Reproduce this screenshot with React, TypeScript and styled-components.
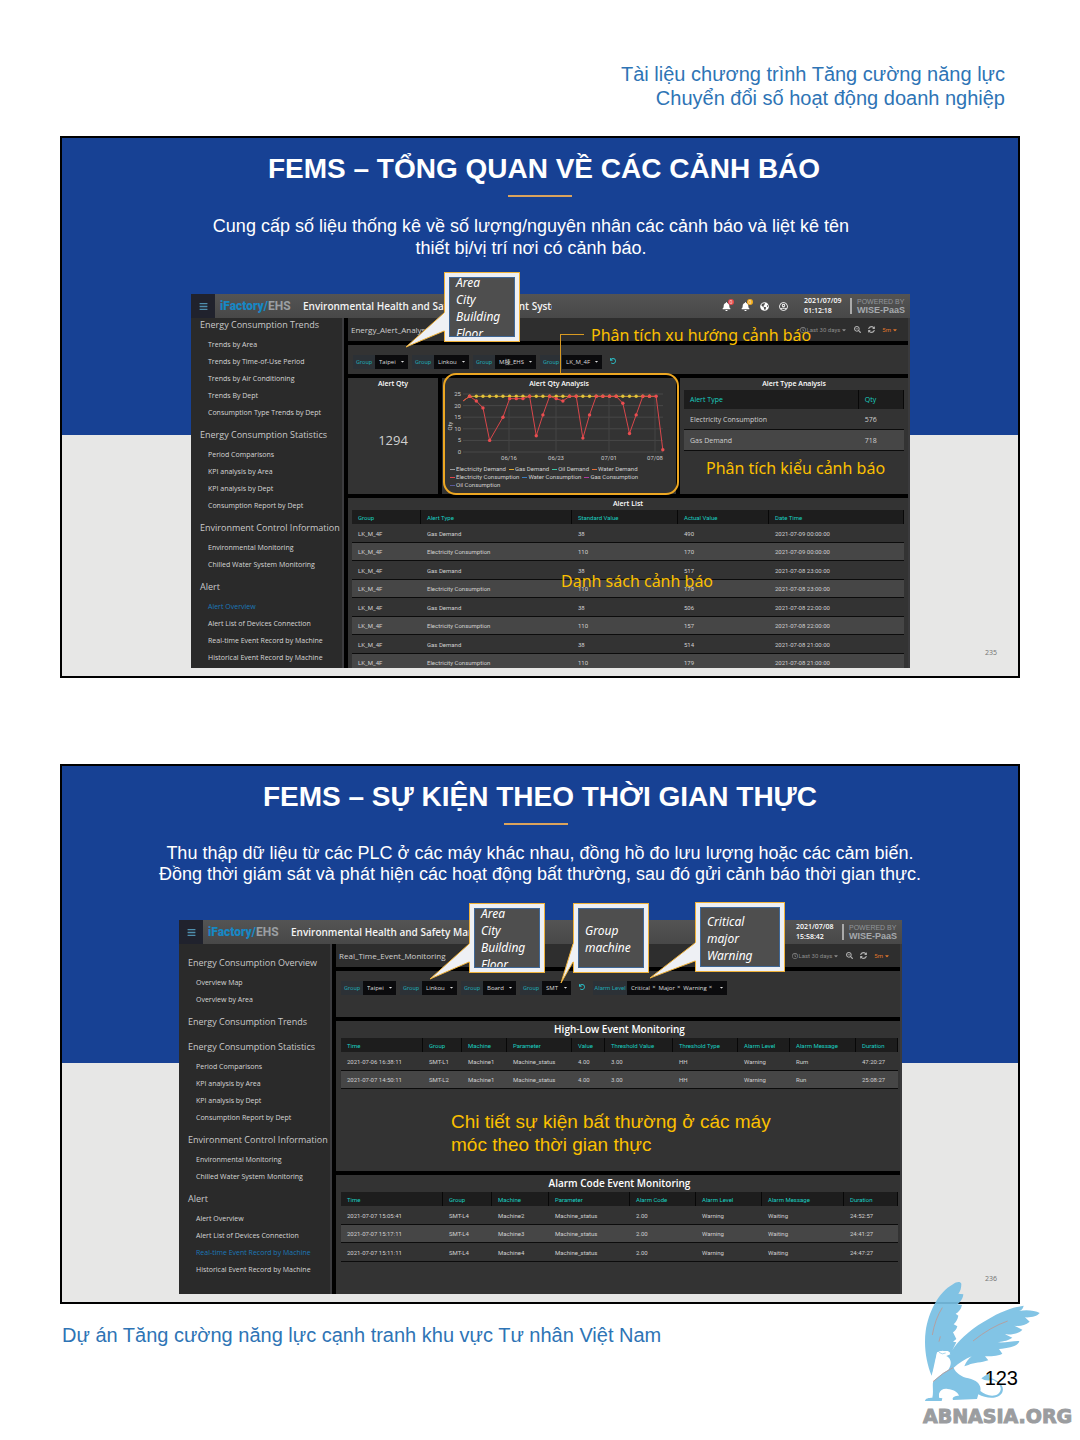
import React from "react";
import styled, { createGlobalStyle } from "styled-components";
import {
  FaBars,
  FaBell,
  FaCaretDown,
  FaGlobeAmericas,
  FaRegClock,
  FaRegUserCircle,
  FaSearchMinus,
  FaSyncAlt,
  FaUndo,
} from "react-icons/fa";

const ui = `"Open Sans", "Noto Sans", "Noto Sans CJK TC", sans-serif`;
const small = `Roboto, "Noto Sans", "Noto Sans CJK TC", sans-serif`;
const note = `"Noto Sans", sans-serif`;
const teal = "#19cfc0";

const GlobalStyle = createGlobalStyle`
  *, *::before, *::after { box-sizing: border-box; }
  body { margin: 0; background: #fff; font-family: "Liberation Sans", Arial, sans-serif; }
  h1, h2, h3, h4, p, ul { margin: 0; padding: 0; font-weight: inherit; }
  button, select { font: inherit; color: inherit; border: 0; padding: 0; margin: 0; background: none; }
  a { color: inherit; text-decoration: none; }
`;

/* ---------- document ---------- */

const Page = styled.div`
  padding: 62px 60px 0;
`;
const DocHeader = styled.header`
  padding: 0 15px 26px;
  text-align: right;
  font-size: 20px;
  line-height: 24px;
  color: #2e74b5;
`;
const Slides = styled.main`
  display: flex;
  flex-direction: column;
  gap: 86px;
`;
const DocFooter = styled.footer`
  position: relative;
  padding: 19px 2px 0;
  font-size: 20px;
  line-height: 24px;
  color: #2e74b5;
`;
const PageNumber = styled.p`
  position: relative;
  z-index: 1;
  padding: 19px 0 51px;
  text-align: right;
  color: #000;
`;
const Watermark = styled.div`
  position: absolute;
  top: -25px;
  right: -57px;
  width: 154px;
  opacity: 0.92;
`;
const Griffin = styled.svg`
  display: block;
  width: 120px;
  height: 124px;
`;
const WatermarkText = styled.p`
  font: bold 19px/26px "DejaVu Sans", sans-serif;
  color: #939598;
  -webkit-text-stroke: 1px #939598;
`;

/* ---------- slide ---------- */

const SlideBox = styled.section`
  position: relative;
  border: 2px solid #000;
  padding: 13px 0 8px;
  background: linear-gradient(#174194 297px, #e7e7e6 297px);
`;
const SlideHead = styled.header<{ $indent: number }>`
  display: flex;
  flex-direction: column;
  align-items: center;
  padding-left: ${(p) => p.$indent}px;
  color: #fff;
  text-align: center;
`;
const SlideTitle = styled.h1`
  font-size: 28px;
  line-height: 36px;
  font-weight: bold;
`;
const Rule = styled.hr`
  width: 64px;
  height: 2px;
  margin: 8px 8px 18px 0;
  border: 0;
  background: #dba35c;
`;
const Lead = styled.p<{ $line: number; $outdent: number }>`
  font-size: 18px;
  line-height: ${(p) => p.$line}px;
  padding-right: ${(p) => p.$outdent}px;
`;
const SlideNumber = styled.span`
  position: absolute;
  right: 21px;
  bottom: 18px;
  font: 7px/10px "Noto Sans", sans-serif;
  color: #777;
`;
const Figure = styled.div<{ $left: number; $right: number }>`
  position: relative;
  margin: 35px ${(p) => p.$right}px 0 ${(p) => p.$left}px;
`;

/* ---------- dashboard shell ---------- */

const Dashboard = styled.div<{ $height: number }>`
  display: flex;
  flex-direction: column;
  height: ${(p) => p.$height}px;
  overflow: hidden;
  background: #000;
  color: #d0d0d0;
  font-family: ${ui};
`;
const AppBar = styled.header`
  flex: none;
  display: flex;
  align-items: center;
  height: 24px;
  background: linear-gradient(#545454, #484848);
`;
const MenuButton = styled.button`
  flex: none;
  display: grid;
  place-items: center;
  width: 24px;
  height: 24px;
  background: #20222d;
  color: #4f8fae;
  font-size: 9px;
`;
const Brand = styled.span`
  flex: none;
  width: 83px;
  padding-left: 5px;
  font: bold 12px/24px Roboto, sans-serif;
  color: #9b9fa3;
  white-space: nowrap;
  b { font-weight: 900; color: #1787c4; }
`;
const AppTitle = styled.h2`
  width: 254px;
  padding-left: 5px;
  overflow: hidden;
  white-space: nowrap;
  font-size: 10px;
  line-height: 24px;
  font-weight: 600;
  color: #f4f4f4;
`;
const BarTools = styled.div`
  margin-left: auto;
  display: flex;
  align-items: center;
  padding-right: 6px;
  color: #fff;
`;
const IconButton = styled.button`
  position: relative;
  display: grid;
  place-items: center;
  width: 19px;
  height: 20px;
  font-size: 9px;
`;
const Badge = styled.span<{ $color: string }>`
  position: absolute;
  top: 3px;
  right: 2px;
  width: 6px;
  height: 6px;
  border-radius: 3px;
  background: ${(p) => p.$color};
  font-size: 5px;
  line-height: 6px;
  text-align: center;
`;
const Stamp = styled.time`
  width: 46px;
  margin-left: 11px;
  font-size: 7px;
  line-height: 10px;
  font-weight: 600;
`;
const Powered = styled.p`
  width: 54px;
  padding-left: 5px;
  border-left: 2px solid #aaa;
  font: 7px/8px "Liberation Sans", sans-serif;
  color: #90959a;
  white-space: nowrap;
  b { display: block; color: #a5a9ad; font-size: 9px; }
`;
const Body = styled.div`
  flex: 1;
  display: flex;
  min-height: 0;
`;
const SideNav = styled.nav`
  flex: none;
  width: 153px;
  padding-left: 9px;
  overflow: hidden;
  background: #2a2a2a;
  border-right: 2px solid #3c3c3f;
  white-space: nowrap;
`;
const NavScroll = styled.div<{ $offset: number }>`
  margin-top: ${(p) => p.$offset}px;
`;
const NavHeading = styled.h3`
  padding-top: 2px;
  font-size: 9px;
  line-height: 23px;
  color: #c9c9c9;
`;
const NavList = styled.ul`
  list-style: none;
  padding-left: 8px;
`;
const NavItem = styled.li<{ $active: boolean }>`
  font-size: 7px;
  line-height: 17px;
  color: ${(p) => (p.$active ? "#1b78b8" : "#d6d6d6")};
`;
const Main = styled.div`
  flex: 1;
  min-width: 0;
  display: flex;
  flex-direction: column;
  gap: 4px;
  margin-left: 4px;
  border-right: 2px solid #3a3a3c;
`;
const TitleBar = styled.div`
  flex: none;
  display: flex;
  align-items: center;
  justify-content: space-between;
  height: 23px;
  padding: 0 10px 0 3px;
  background: #2e2e2e;
  font-size: 8px;
`;
const TimeTools = styled.div`
  display: flex;
  align-items: center;
  gap: 7px;
  font-size: 7px;
  color: #b0b0b0;
`;
const TextButton = styled.button<{ $color: string }>`
  display: flex;
  align-items: center;
  gap: 1px;
  color: ${(p) => p.$color};
  font: 6px/10px ${small};
`;

/* ---------- filters ---------- */

const Filters = styled.form<{ $height: number }>`
  flex: none;
  display: flex;
  align-items: flex-start;
  gap: 4px;
  height: ${(p) => p.$height}px;
  padding: 10px 5px 0;
  background: #333;
  font-size: 6px;
`;
const Field = styled.div`
  display: flex;
  height: 14px;
  line-height: 14px;
`;
const FieldLabel = styled.label<{ $width: number }>`
  width: ${(p) => p.$width}px;
  background: #2c3136;
  color: #1fa3ae;
  text-align: center;
  font-family: ${small};
  white-space: nowrap;
`;
const SelectWrap = styled.span<{ $width: number }>`
  position: relative;
  width: ${(p) => p.$width}px;
  background: #0b0b0d;
  color: #ddd;
`;
const Select = styled.select`
  display: block;
  width: 100%;
  height: 14px;
  padding-left: 4px;
  appearance: none;
  font-size: 6px;
`;
const Caret = styled(FaCaretDown)`
  position: absolute;
  right: 3px;
  top: 4px;
  font-size: 5px;
  pointer-events: none;
`;
const ResetButton = styled.button`
  width: 14px;
  height: 14px;
  color: #2bbcc4;
  font-size: 6px;
`;
const Tags = styled.div`
  position: relative;
  display: flex;
  gap: 3px;
  width: 100px;
  padding-left: 4px;
  background: #0b0b0d;
  color: #ddd;
  white-space: nowrap;
`;
const Tag = styled.span`
  display: flex;
  gap: 2px;
  button { line-height: 10px; height: 12px; }
`;

/* ---------- panels and tables ---------- */

const PanelRow = styled.div`
  flex: none;
  display: grid;
  grid-template-columns: 90fr 234fr 228fr;
  gap: 4px;
  height: 116px;
`;
const Panel = styled.section<{ $height?: number; $flush?: boolean }>`
  ${(p) => (p.$height ? `flex: none; height: ${p.$height}px;` : "flex: 1;")}
  min-width: 0;
  min-height: 0;
  overflow: hidden;
  padding: ${(p) => (p.$flush ? "0 2px 0 5px" : "0 4px")};
  background: #333;
`;
const PanelTitle = styled.h3<{ $large?: boolean }>`
  font-size: ${(p) => (p.$large ? 10 : 7)}px;
  line-height: ${(p) => (p.$large ? 17 : 12)}px;
  font-weight: 600;
  text-align: center;
  color: #fff;
`;
const BigNumber = styled.p`
  padding-top: 39px;
  text-align: center;
  font-size: 13px;
  line-height: 22px;
`;
const Table = styled.table<{ $roomy?: boolean }>`
  width: 100%;
  table-layout: fixed;
  border-collapse: separate;
  border-spacing: 0;
  font-family: ${(p) => (p.$roomy ? ui : small)};
  font-size: ${(p) => (p.$roomy ? 7 : 6)}px;
  white-space: nowrap;
  th, td { padding: 0 0 0 6px; text-align: left; font-weight: normal; }
  th {
    height: ${(p) => (p.$roomy ? 19 : 14)}px;
    color: ${teal};
    background: #1d1d1d;
    border-right: 1px solid #080808;
  }
  td {
    height: ${(p) => (p.$roomy ? 21 : 19)}px;
    border-bottom: 1px solid #0c0c0c;
  }
  tbody tr:nth-child(even) td {
    height: ${(p) => (p.$roomy ? 21 : 18)}px;
    background: #464646;
  }
`;
const ChartSvg = styled.svg`
  display: block;
  width: 100%;
  height: 72px;
  font-family: ${small};
`;
const Legend = styled.ul`
  list-style: none;
  display: flex;
  flex-wrap: wrap;
  column-gap: 3px;
  margin: 3px 10px 0 0;
  padding-left: 4px;
  font: 6px/8px ${small};
  white-space: nowrap;
`;
const LegendItem = styled.li<{ $color: string }>`
  display: flex;
  align-items: center;
  gap: 1px;
  &::before {
    content: "";
    width: 5px;
    height: 1px;
    background: ${(p) => p.$color};
  }
`;

/* ---------- annotations ---------- */

const CalloutBox = styled.aside<{ $x: number; $y: number; $w: number; $h: number }>`
  position: absolute;
  left: ${(p) => p.$x}px;
  top: ${(p) => p.$y}px;
  width: ${(p) => p.$w}px;
  height: ${(p) => p.$h}px;
  padding: 4px;
  border: 1px solid #efb23a;
  background: #eef0f4;
`;
const CalloutInner = styled.div`
  display: flex;
  align-items: center;
  height: 100%;
  padding: 2px 0 0 6px;
  overflow: hidden;
  border: 1px solid #3f6796;
  background: #4e4e4e;
  font: italic 12px/17px ${note};
  color: #fff;
  white-space: pre-line;
`;
const Tail = styled.svg`
  position: absolute;
  left: -1px;
  top: -1px;
  width: 5px;
  height: 80px;
  overflow: visible;
`;
const Ring = styled.div`
  position: absolute;
  left: 252px;
  right: 231px;
  top: 79px;
  height: 122px;
  border: 2px solid #eda722;
  border-radius: 13px;
`;
const Connector = styled.div`
  position: absolute;
  left: 369px;
  top: 40px;
  width: 24px;
  height: 39px;
  border: solid #d99a22;
  border-width: 1px 0 0 1px;
`;
const Note = styled.p<{ $x: number; $y: number; $sans?: boolean }>`
  position: absolute;
  left: ${(p) => p.$x}px;
  top: ${(p) => p.$y}px;
  font: ${(p) => (p.$sans ? `19px/23px "Liberation Sans", sans-serif` : `16px/22px ${note}`)};
  color: #fcc000;
  white-space: pre;
`;

/* ---------- data ---------- */

type NavGroup = { title: string; items: string[] };

const statistics: NavGroup = {
  title: "Energy Consumption Statistics",
  items: ["Period Comparisons", "KPI analysis by Area", "KPI analysis by Dept", "Consumption Report by Dept"],
};
const environment: NavGroup = {
  title: "Environment Control Information",
  items: ["Environmental Monitoring", "Chilled Water System Monitoring"],
};
const alertGroup: NavGroup = {
  title: "Alert",
  items: [
    "Alert Overview",
    "Alert List of Devices Connection",
    "Real-time Event Record by Machine",
    "Historical Event Record by Machine",
  ],
};
const overviewNav: NavGroup[] = [
  {
    title: "Energy Consumption Trends",
    items: [
      "Trends by Area",
      "Trends by Time-of-Use Period",
      "Trends by Air Conditioning",
      "Trends By Dept",
      "Consumption Type Trends by Dept",
    ],
  },
  statistics,
  environment,
  alertGroup,
];
const eventNav: NavGroup[] = [
  { title: "Energy Consumption Overview", items: ["Overview Map", "Overview by Area"] },
  { title: "Energy Consumption Trends", items: [] },
  statistics,
  environment,
  alertGroup,
];

const alertRows = [
  ["490", "170", "2021-07-09 00:00:00"],
  ["517", "178", "2021-07-08 23:00:00"],
  ["506", "157", "2021-07-08 22:00:00"],
  ["514", "179", "2021-07-08 21:00:00"],
].flatMap(([gas, power, at]) => [
  ["LK_M_4F", "Gas Demand", "38", gas, at],
  ["LK_M_4F", "Electricity Consumption", "110", power, at],
]);

const alertsPerDay: (number | null)[] = [
  22, 24, 22, 19, 5, null, 15, 23, 23, 23, 24, 7, 16, 24, 23, 22, 24, 24, 6, 16, 24, 24, 24, 24, 21, 8, 16, 24, 24, 24, 1,
];
const legend: [string, string][] = [
  ["Electricity Demand", "#9a9a9a"],
  ["Gas Demand", "#e0a92a"],
  ["Oil Demand", "#3fc7a4"],
  ["Water Demand", "#e0703a"],
  ["Electricity Consumption", "#e0474c"],
  ["Water Consumption", "#3d7cc0"],
  ["Gas Consumption", "#b03aa0"],
  ["Oil Consumption", "#5a5a9a"],
];

/* ---------- components ---------- */

type DataTableProps = { head: string[]; widths: number[]; rows: string[][]; roomy?: boolean };

function DataTable({ head, widths, rows, roomy }: DataTableProps) {
  const total = widths.reduce((a, b) => a + b, 0);
  return (
    <Table $roomy={roomy}>
      <colgroup>
        {widths.map((w, i) => (
          <col key={i} style={{ width: `${(w / total) * 100}%` }} />
        ))}
      </colgroup>
      <thead>
        <tr>{head.map((h) => <th key={h} scope="col">{h}</th>)}</tr>
      </thead>
      <tbody>
        {rows.map((r, i) => (
          <tr key={i}>{r.map((c, j) => <td key={j}>{c}</td>)}</tr>
        ))}
      </tbody>
    </Table>
  );
}

function SelectField({ id, value, width }: { id: string; value: string; width: number }) {
  return (
    <Field>
      <FieldLabel htmlFor={id} $width={22}>Group</FieldLabel>
      <SelectWrap $width={width}>
        <Select id={id} defaultValue={value}>
          <option>{value}</option>
        </Select>
        <Caret />
      </SelectWrap>
    </Field>
  );
}

function TrendChart() {
  const x = (i: number) => 17 + i * 6.66;
  const y = (v: number) => 62 - v * 2.32;
  const points = alertsPerDay.flatMap((v, i) => (v === null ? [] : [{ x: x(i), y: y(v), v }]));
  const line = points.map((p) => `${p.x},${p.y}`).join(" ");
  return (
    <ChartSvg viewBox="0 0 226 72" preserveAspectRatio="none" role="img" aria-label="Alert Qty Analysis">
      {[0, 5, 10, 15, 20, 25].map((v) => (
        <g key={v}>
          <line x1="17" x2="217" y1={y(v)} y2={y(v)} stroke="#484848" strokeWidth="1" />
          <text x="15" y={y(v) + 2} fontSize="6" fill="#c8c8c8" textAnchor="end">{v}</text>
        </g>
      ))}
      {[["06/16", 63], ["06/23", 110], ["07/01", 163], ["07/08", 209]].map(([d, cx]) => (
        <g key={d}>
          <line x1={cx} x2={cx} y1={y(25)} y2={y(0)} stroke="#444" />
          <text x={cx} y="70" fontSize="6" fill="#c8c8c8" textAnchor="middle">{d}</text>
        </g>
      ))}
      <text transform="translate(6 36) rotate(-90)" fontSize="6" fill="#c8c8c8" textAnchor="middle">Qty</text>
      <polyline points={`${x(0)},${y(22)} ${x(1)},${y(24)} ${x(29)},${y(24)}`} fill="none" stroke="#d8a52c" />
      {Array.from({ length: 28 }, (_, i) => (
        <circle key={i} cx={x(i + 1)} cy={y(24)} r="1.7" fill="#e0c23a" />
      ))}
      <polyline points={line} fill="none" stroke="#d9474b" />
      {points.slice(1).map((p) => (
        <circle key={p.x} cx={p.x} cy={p.y} r="1.7" fill="#ea4d50" />
      ))}
    </ChartSvg>
  );
}

type ShellProps = {
  height: number;
  navOffset: number;
  nav: NavGroup[];
  active: string;
  title: string;
  date: string;
  time: string;
  children: React.ReactNode;
};

function Shell({ height, navOffset, nav, active, title, date, time, children }: ShellProps) {
  return (
    <Dashboard $height={height}>
      <AppBar>
        <MenuButton type="button" aria-label="Menu"><FaBars /></MenuButton>
        <Brand><b>iFactory/</b>EHS</Brand>
        <AppTitle>Environmental Health and Safety Management System</AppTitle>
        <BarTools>
          <IconButton type="button" aria-label="Alerts"><FaBell /><Badge $color="#e5484d">0</Badge></IconButton>
          <IconButton type="button" aria-label="Notices"><FaBell /><Badge $color="#f0a81e">0</Badge></IconButton>
          <IconButton type="button" aria-label="Language"><FaGlobeAmericas /></IconButton>
          <IconButton type="button" aria-label="Account"><FaRegUserCircle /></IconButton>
          <Stamp>{date}<br />{time}</Stamp>
          <Powered>POWERED BY<b>WISE-PaaS</b></Powered>
        </BarTools>
      </AppBar>
      <Body>
        <SideNav>
          <NavScroll $offset={navOffset}>
            {nav.map((g) => (
              <React.Fragment key={g.title}>
                <NavHeading>{g.title}</NavHeading>
                <NavList>
                  {g.items.map((item) => (
                    <NavItem key={item} $active={item === active}><a href="#">{item}</a></NavItem>
                  ))}
                </NavList>
              </React.Fragment>
            ))}
          </NavScroll>
        </SideNav>
        <Main>
          <TitleBar>
            <span>{title}</span>
            <TimeTools>
              <TextButton type="button" $color="#8c8c8c"><FaRegClock />Last 30 days <FaCaretDown /></TextButton>
              <FaSearchMinus />
              <FaSyncAlt />
              <TextButton type="button" $color="#e0762c">5m <FaCaretDown /></TextButton>
            </TimeTools>
          </TitleBar>
          {children}
        </Main>
      </Body>
    </Dashboard>
  );
}

type CalloutProps = { x: number; y: number; w: number; h: number; tip: [number, number]; text: string };

function Callout({ x, y, w, h, tip, text }: CalloutProps) {
  const [tx, ty] = tip;
  return (
    <CalloutBox $x={x} $y={y} $w={w} $h={h}>
      <CalloutInner><p>{text}</p></CalloutInner>
      <Tail aria-hidden="true">
        <polygon points={`4,39 0,41 ${tx},${ty} 0,59 4,57`} fill="#eef0f4" />
        <polyline points={`0,41 ${tx},${ty} 0,59`} fill="none" stroke="#efb23a" />
      </Tail>
    </CalloutBox>
  );
}

function AlertOverview() {
  return (
    <SlideBox>
      <SlideHead $indent={8}>
        <SlideTitle>FEMS – TỔNG QUAN VỀ CÁC CẢNH BÁO</SlideTitle>
        <Rule />
        <Lead $line={22} $outdent={26}>
          Cung cấp số liệu thống kê về số lượng/nguyên nhân các cảnh báo và liệt kê tên
          <br />
          thiết bị/vị trí nơi có cảnh báo.
        </Lead>
      </SlideHead>
      <Figure $left={129} $right={108}>
        <Shell
          height={374}
          navOffset={-7}
          nav={overviewNav}
          active="Alert Overview"
          title="Energy_Alert_Analysis"
          date="2021/07/09"
          time="01:12:18"
        >
          <Filters $height={29}>
            <SelectField id="area" value="Taipei" width={33} />
            <SelectField id="city" value="Linkou" width={35} />
            <SelectField id="building" value="M棟_EHS" width={41} />
            <SelectField id="floor" value="LK_M_4F" width={40} />
            <ResetButton type="button" aria-label="Reset"><FaUndo /></ResetButton>
          </Filters>
          <PanelRow>
            <Panel>
              <PanelTitle>Alert Qty</PanelTitle>
              <BigNumber>1294</BigNumber>
            </Panel>
            <Panel>
              <PanelTitle>Alert Qty Analysis</PanelTitle>
              <TrendChart />
              <Legend>
                {legend.map(([name, color]) => (
                  <LegendItem key={name} $color={color}>{name}</LegendItem>
                ))}
              </Legend>
            </Panel>
            <Panel>
              <PanelTitle>Alert Type Analysis</PanelTitle>
              <DataTable
                roomy
                head={["Alert Type", "Qty"]}
                widths={[178, 46]}
                rows={[["Electricity Consumption", "576"], ["Gas Demand", "718"]]}
              />
            </Panel>
          </PanelRow>
          <Panel>
            <PanelTitle>Alert List</PanelTitle>
            <DataTable
              head={["Group", "Alert Type", "Standard Value", "Actual Value", "Date Time"]}
              widths={[69, 151, 106, 91, 135]}
              rows={alertRows}
            />
          </Panel>
        </Shell>
        <Ring />
        <Connector />
        <Note $x={400} $y={30}>Phân tích xu hướng cảnh báo</Note>
        <Note $x={515} $y={163}>Phân tích kiểu cảnh báo</Note>
        <Note $x={370} $y={276}>Danh sách cảnh báo</Note>
        <Callout x={253} y={-22} w={76} h={70} tip={[-38, 75]} text={"Area\nCity\nBuilding\nFloor"} />
      </Figure>
      <SlideNumber>235</SlideNumber>
    </SlideBox>
  );
}

function RealTimeEvents() {
  return (
    <SlideBox>
      <SlideHead $indent={0}>
        <SlideTitle>FEMS – SỰ KIỆN THEO THỜI GIAN THỰC</SlideTitle>
        <Rule />
        <Lead $line={21} $outdent={0}>
          Thu thập dữ liệu từ các PLC ở các máy khác nhau, đồng hồ đo lưu lượng hoặc các cảm biến.
          <br />
          Đồng thời giám sát và phát hiện các hoạt động bất thường, sau đó gửi cảnh báo thời gian thực.
        </Lead>
      </SlideHead>
      <Figure $left={117} $right={116}>
        <Shell
          height={374}
          navOffset={5}
          nav={eventNav}
          active="Real-time Event Record by Machine"
          title="Real_Time_Event_Monitoring"
          date="2021/07/08"
          time="15:58:42"
        >
          <Filters $height={46}>
            <SelectField id="event-area" value="Taipei" width={33} />
            <SelectField id="event-city" value="Linkou" width={35} />
            <SelectField id="event-group" value="Board" width={33} />
            <SelectField id="event-line" value="SMT" width={29} />
            <ResetButton type="button" aria-label="Reset"><FaUndo /></ResetButton>
            <Field>
              <FieldLabel as="span" $width={34}>Alarm Level</FieldLabel>
              <Tags>
                {["Critical", "Major", "Warning"].map((t) => (
                  <Tag key={t}>{t}<button type="button" aria-label={`Remove ${t}`}>×</button></Tag>
                ))}
                <Caret />
              </Tags>
            </Field>
          </Filters>
          <Panel $flush $height={150}>
            <PanelTitle $large>High-Low Event Monitoring</PanelTitle>
            <DataTable
              head={["Time", "Group", "Machine", "Parameter", "Value", "Threshold Value", "Threshold Type", "Alarm Level", "Alarm Message", "Duration"]}
              widths={[82, 39, 45, 65, 33, 68, 65, 52, 66, 42]}
              rows={[
                ["2021-07-06 16:38:11", "SMT-L1", "Machine1", "Machine_status", "4.00", "3.00", "HH", "Warning", "Rum", "47:20:27"],
                ["2021-07-07 14:50:11", "SMT-L2", "Machine1", "Machine_status", "4.00", "3.00", "HH", "Warning", "Run", "25:08:27"],
              ]}
            />
          </Panel>
          <Panel $flush>
            <PanelTitle $large>Alarm Code Event Monitoring</PanelTitle>
            <DataTable
              head={["Time", "Group", "Machine", "Parameter", "Alarm Code", "Alarm Level", "Alarm Message", "Duration"]}
              widths={[102, 49, 57, 81, 66, 66, 82, 54]}
              rows={[
                ["2021-07-07 15:05:41", "SMT-L4", "Machine2", "Machine_status", "2.00", "Warning", "Waiting", "24:52:57"],
                ["2021-07-07 15:17:11", "SMT-L4", "Machine3", "Machine_status", "2.00", "Warning", "Waiting", "24:41:27"],
                ["2021-07-07 15:11:11", "SMT-L4", "Machine4", "Machine_status", "2.00", "Warning", "Waiting", "24:47:27"],
              ]}
            />
          </Panel>
        </Shell>
        <Note $sans $x={272} $y={190}>{"Chi tiết sự kiện bất thường ở các máy\nmóc theo thời gian thực"}</Note>
        <Callout x={290} y={-17} w={76} h={70} tip={[-39, 76]} text={"Area\nCity\nBuilding\nFloor"} />
        <Callout x={394} y={-17} w={76} h={70} tip={[-12, 80]} text={"Group\nmachine"} />
        <Callout x={516} y={-18} w={90} h={70} tip={[-45, 76]} text={"Critical\nmajor\nWarning"} />
      </Figure>
      <SlideNumber>236</SlideNumber>
    </SlideBox>
  );
}

export default function App() {
  return (
    <>
      <GlobalStyle />
      <Page>
        <DocHeader>
          <p>Tài liệu chương trình Tăng cường năng lực</p>
          <p>Chuyển đổi số hoạt động doanh nghiệp</p>
        </DocHeader>
        <Slides>
          <AlertOverview />
          <RealTimeEvents />
        </Slides>
        <DocFooter>
          <p>Dự án Tăng cường năng lực cạnh tranh khu vực Tư nhân Việt Nam</p>
          <PageNumber>123</PageNumber>
          <Watermark>
            <Griffin viewBox="60 48 360 372" aria-hidden="true">
              <g fill="#78bfe3">
                <path d="M86 338C70 300 62 250 68 205C76 150 105 88 150 64C160 56 172 54 175 62C175 75 172 84 166 92L181 94C180 106 172 118 163 124L177 126C174 140 166 148 158 152L166 158C164 170 158 178 152 184L163 190C160 200 156 204 150 208L160 228L150 236L160 238L148 262C160 240 200 200 240 178C280 152 320 134 362 128C360 138 354 142 348 144C370 140 395 142 410 150C402 160 386 164 366 163L380 176C366 188 350 190 334 188L358 200C348 212 326 216 306 214L328 224C310 236 296 234 284 238C306 240 330 234 349 234C346 250 318 256 288 258L298 272C282 280 262 280 246 280L256 292C234 300 214 298 196 306L184 310C190 296 196 288 206 280C186 288 168 300 152 314C158 330 176 342 196 346C222 352 236 366 232 384C246 396 270 404 286 392C302 378 290 358 268 350L262 352C254 354 242 352 235 346C244 340 250 332 260 334L260 344C284 350 306 366 298 388C286 412 248 406 226 394L222 408L150 411C146 404 154 398 168 398C164 386 150 380 134 378C120 376 112 382 108 392L108 404L118 406L116 414L66 414C66 406 78 404 88 404C92 388 88 372 90 358C98 346 118 332 136 320C150 300 142 282 128 278L142 270L134 264L112 264L102 270C96 290 92 318 86 338Z" />
              </g>
              <path d="M102 268L96 304L88 334L100 326L122 316C128 302 122 290 128 280L142 274L138 266L118 263Z" fill="#fff" />
              <path d="M108 268q10 8 20 2" fill="none" stroke="#78bfe3" strokeWidth="2" />
              <path d="M118 134Q96 168 88 216M112 220l-4 16M314 174Q262 192 210 234M90 356Q120 328 150 314" fill="none" stroke="#ab9a9c" strokeWidth="3" />
            </Griffin>
            <WatermarkText>ABNASIA.ORG</WatermarkText>
          </Watermark>
        </DocFooter>
      </Page>
    </>
  );
}
